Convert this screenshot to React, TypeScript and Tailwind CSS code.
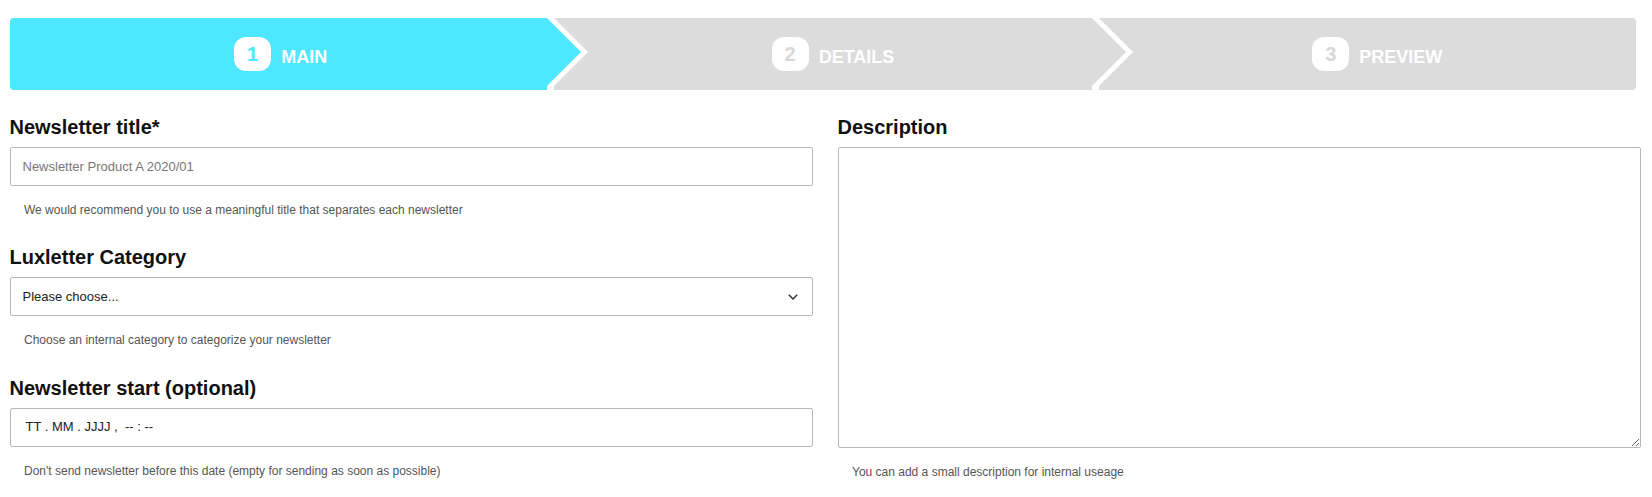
import React from "react";

interface StepProps {
  n: number;
  label: string;
  active: boolean;
  first?: boolean;
  last?: boolean;
}

function Step({ n, label, active, first, last }: StepProps) {
  return (
    <div
      className={`relative h-[72px] flex items-center justify-center gap-[10px] ${
        active ? "bg-[#4de8ff]" : "bg-[#dcdcdc]"
      } ${first ? "rounded-l-[4px] pl-[4px]" : "pl-[20px]"} ${last ? "rounded-r-[4px]" : ""}`}
    >
      <span
        className={`w-[37px] h-[34px] rounded-[12px] bg-white flex items-center justify-center text-[20px] font-bold leading-none ${
          active ? "text-[#4de8ff]" : "text-[#d8d8d8]"
        }`}
      >
        {n}
      </span>
      <span className="text-[18px] font-bold text-white uppercase leading-none mt-[5px]">
        {label}
      </span>
      {!last && (
        <>
          <span className="absolute top-0 left-[calc(100%+7px)] w-0 h-0 border-y-[34px] border-y-transparent border-l-[34px] border-l-white z-10" />
          <span
            className={`absolute top-0 left-full w-0 h-0 border-y-[34px] border-y-transparent border-l-[34px] z-20 ${
              active ? "border-l-[#4de8ff]" : "border-l-[#dcdcdc]"
            }`}
          />
        </>
      )}
    </div>
  );
}

function Label({ children }: { children: React.ReactNode }) {
  return (
    <div className="h-[23px] leading-[23px] text-[20px] font-bold text-[#111] mb-[8px]">
      {children}
    </div>
  );
}

function Help({ children }: { children: React.ReactNode }) {
  return (
    <div className="mt-[17px] pl-[14.5px] text-[12px] leading-[14px] text-[#555]">
      {children}
    </div>
  );
}

export default function App() {
  return (
    <div className="min-h-screen bg-white font-['Liberation_Sans',Arial,sans-serif] pt-[18px]">
      <div className="grid grid-cols-3 gap-[7px] ml-[10px] mr-[16px]">
        <Step n={1} label="Main" active first />
        <Step n={2} label="Details" active={false} />
        <Step n={3} label="Preview" active={false} last />
      </div>

      <form className="grid grid-cols-2 gap-x-[25px] pl-[9.5px] pr-[11.5px] pt-[25.5px]">
        <div className="flex flex-col">
          <div className="mb-[29.5px]">
            <Label>Newsletter title*</Label>
            <input
              type="text"
              placeholder="Newsletter Product A 2020/01"
              className="w-full h-[39px] border border-[#b8b8b8] rounded-[2px] px-[12px] text-[13px] text-[#222] placeholder:text-[#777] outline-none"
            />
            <Help>We would recommend you to use a meaningful title that separates each newsletter</Help>
          </div>

          <div className="mb-[29.5px]">
            <Label>Luxletter Category</Label>
            <div className="relative">
              <select
                defaultValue=""
                className="w-full h-[39px] appearance-none border border-[#b8b8b8] rounded-[2px] pl-[12px] pr-[30px] text-[13px] text-[#222] bg-white outline-none"
              >
                <option value="">Please choose...</option>
                <option value="1">Product news</option>
                <option value="2">Internal</option>
              </select>
              <svg
                className="absolute right-[14.5px] top-[17px] pointer-events-none"
                width="10"
                height="6"
                viewBox="0 0 10 6"
                fill="none"
              >
                <path d="M0.8 0.8 L5 5 L9.2 0.8" stroke="#333" strokeWidth="1.5" />
              </svg>
            </div>
            <Help>Choose an internal category to categorize your newsletter</Help>
          </div>

          <div>
            <Label>Newsletter start (optional)</Label>
            <div className="w-full h-[39px] border border-[#b8b8b8] rounded-[2px] pl-[15px] flex items-center text-[13px] text-[#222] whitespace-pre">
              TT . MM . JJJJ ,  -- : --
            </div>
            <Help>Don't send newsletter before this date (empty for sending as soon as possible)</Help>
          </div>
        </div>

        <div className="flex flex-col">
          <Label>Description</Label>
          <textarea className="block w-full h-[301px] border border-[#b8b8b8] rounded-[2px] p-[10px] text-[13px] resize-y outline-none" />
          <Help>You can add a small description for internal useage</Help>
        </div>
      </form>
    </div>
  );
}
